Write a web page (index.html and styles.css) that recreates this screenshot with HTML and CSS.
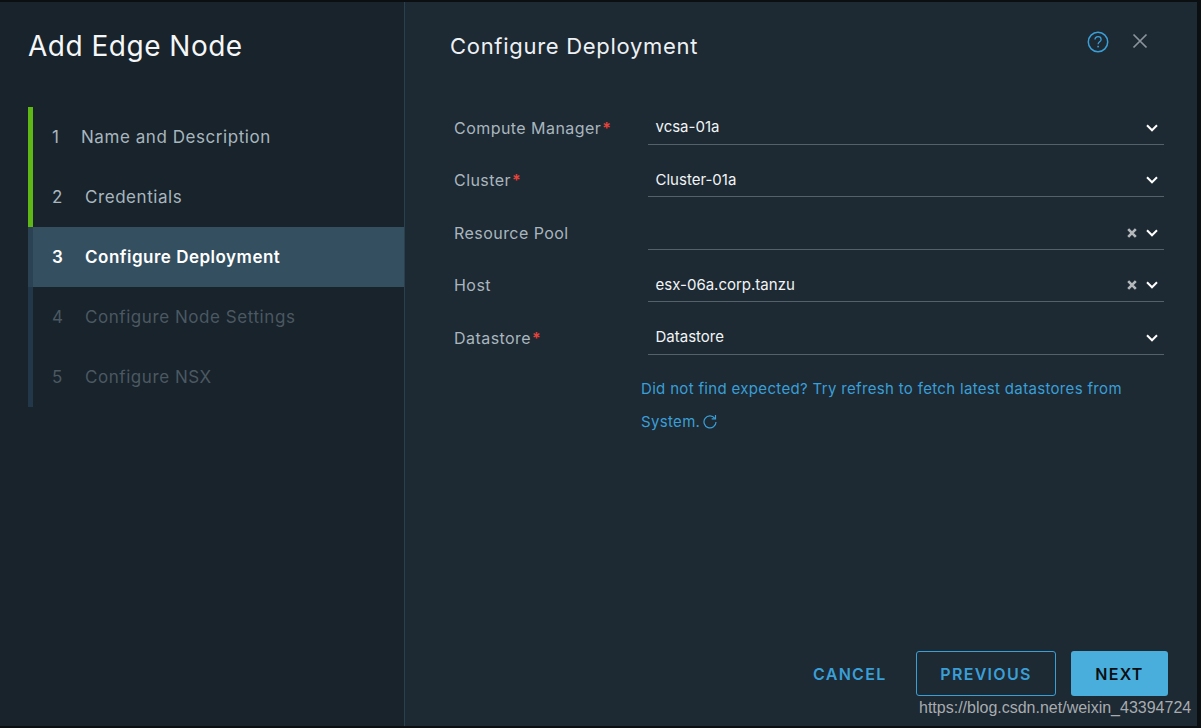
FILE: index.html
```html
<!DOCTYPE html>
<html lang="en">
<head>
<meta charset="utf-8">
<title>Add Edge Node</title>
<link rel="stylesheet" href="styles.css">
</head>
<body>
<div class="modal">
  <aside class="side">
    <h1 class="side-title">Add Edge Node</h1>
    <ol class="steps">
      <li class="step done"><span class="num num-first">1</span><span>Name and Description</span></li>
      <li class="step done"><span class="num">2</span><span>Credentials</span></li>
      <li class="step active"><span class="num">3</span><span>Configure Deployment</span></li>
      <li class="step todo"><span class="num">4</span><span>Configure Node Settings</span></li>
      <li class="step todo"><span class="num">5</span><span>Configure NSX</span></li>
    </ol>
  </aside>
  <main class="main">
    <header class="head">
      <h2 class="main-title">Configure Deployment</h2>
      <div class="head-icons">
        <svg class="help" width="22" height="22" viewBox="0 0 22 22" fill="none"><circle cx="11" cy="11" r="9.7" stroke="#3a9fd6" stroke-width="1.5"/><path d="M8 8.6c0-1.8 1.4-3 3.1-3s3 1.1 3 2.8c0 2.4-3 2.4-3 4.9" stroke="#3a9fd6" stroke-width="1.3"/><rect x="10.3" y="14.8" width="1.6" height="1.6" fill="#3a9fd6"/></svg>
        <svg class="close" width="16" height="16" viewBox="0 0 16 16" fill="none"><path d="M1.5 1.5l13 13M14.5 1.5l-13 13" stroke="#8a949c" stroke-width="1.7"/></svg>
      </div>
    </header>
    <form class="form">
      <div class="row"><label class="label">Compute Manager<span class="req">*</span></label>
        <div class="select"><span class="val">vcsa-01a</span><svg class="chev" width="12" height="8" viewBox="0 0 12 8" fill="none"><path d="M1 1.3l5 5 5-5" stroke="#fff" stroke-width="2"/></svg></div></div>
      <div class="row"><label class="label">Cluster<span class="req">*</span></label>
        <div class="select"><span class="val">Cluster-01a</span><svg class="chev" width="12" height="8" viewBox="0 0 12 8" fill="none"><path d="M1 1.3l5 5 5-5" stroke="#fff" stroke-width="2"/></svg></div></div>
      <div class="row"><label class="label">Resource Pool</label>
        <div class="select"><span class="val"></span><svg class="clear" width="10" height="10" viewBox="0 0 10 10" fill="none"><path d="M1.2 1.2l7.6 7.6M8.8 1.2L1.2 8.800" stroke="#b4b8bb" stroke-width="2.600"/></svg><svg class="chev" width="12" height="8" viewBox="0 0 12 8" fill="none"><path d="M1 1.3l5 5 5-5" stroke="#fff" stroke-width="2"/></svg></div></div>
      <div class="row"><label class="label">Host</label>
        <div class="select"><span class="val">esx-06a.corp.tanzu</span><svg class="clear" width="10" height="10" viewBox="0 0 10 10" fill="none"><path d="M1.2 1.2l7.6 7.6M8.8 1.2L1.2 8.800" stroke="#b4b8bb" stroke-width="2.600"/></svg><svg class="chev" width="12" height="8" viewBox="0 0 12 8" fill="none"><path d="M1 1.3l5 5 5-5" stroke="#fff" stroke-width="2"/></svg></div></div>
      <div class="row"><label class="label">Datastore<span class="req">*</span></label>
        <div class="select"><span class="val">Datastore</span><svg class="chev" width="12" height="8" viewBox="0 0 12 8" fill="none"><path d="M1 1.3l5 5 5-5" stroke="#fff" stroke-width="2"/></svg></div></div>
      <p class="hint">Did not find expected? Try refresh to fetch latest datastores from System.<svg class="refresh" width="14" height="15" viewBox="0 0 14 15" fill="none"><path d="M11.800 4.300A6 6 0 1 0 13 8" stroke="#3a9fd6" stroke-width="1.200"/><path d="M12.500 1v3.800H8.700" stroke="#3a9fd6" stroke-width="1.200"/></svg></p>
    </form>
    <footer class="foot">
      <button class="btn link" type="button">CANCEL</button>
      <button class="btn outline" type="button">PREVIOUS</button>
      <button class="btn primary" type="button">NEXT</button>
    </footer>
  </main>
</div>
<div class="watermark">https://blog.csdn.net/weixin_43394724</div>
</body>
</html>
```
FILE: styles.css
```css
* { box-sizing: border-box; }
html, body { margin: 0; height: 100%; }
body {
  background: #0c0f12;
  font-family: Inter, "Noto Sans", sans-serif;
  overflow: hidden;
  position: relative;
  padding: 2px 4px 2px 0;
}
.modal { display: flex; height: 724px; background: #1d2933; }
.side {
  width: 405px;
  flex: none;
  background: #18232c;
  border-right: 1px solid #29404f;
  padding-left: 28px;
}
.side-title {
  margin: 0;
  padding: 26px 0 0 0;
  height: 105px;
  font-size: 28px;
  line-height: 36px;
  font-weight: 400;
  letter-spacing: 0.5px;
  color: #f4f6f7;
}
.steps { list-style: none; margin: 0; padding: 0; }
.step {
  display: flex;
  align-items: center;
  height: 60px;
  border-left: 5px solid #22384a;
  padding: 0 0 1px 19px;
  font-size: 17px;
  letter-spacing: 0.56px;
  color: #a9b6be;
}
.step.done { border-left-color: #5eb715; }
.step.active { background: #344f60; color: #fff; font-weight: 600; letter-spacing: 0.5px; border-left-color: #2b4254; }
.step.todo { color: #4b5861; }
.num { width: 33px; flex: none; }
.num-first { width: 29px; }
.main { flex: 1; min-width: 0; display: flex; flex-direction: column; padding: 0 32px 0 46px; }
.head { display: flex; justify-content: space-between; height: 90px; padding-top: 26px; }
.main-title {
  margin: 0 0 0 -1px;
  font-size: 22px;
  line-height: 36px;
  font-weight: 400;
  letter-spacing: 0.7px;
  color: #eef1f3;
}
.head-icons { display: flex; align-items: flex-start; gap: 23px; padding-right: 17px; }
.help { margin-top: 3px; }
.close { margin-top: 5px; }
.form { display: flex; flex-direction: column; margin: 0; }
.row { display: grid; grid-template-columns: 194px 516px; height: 52.5px; padding-left: 3px; }
.label {
  font-size: 16px;
  letter-spacing: 0.45px;
  color: #a9b6be;
  padding-top: 23.500px;
  line-height: 24px;
}
.req { color: #e8433a; margin-left: 1px; font-size: 16px; font-weight: 600; }
.select {
  display: flex;
  align-items: center;
  height: 52.5px;
  padding: 20px 6px 0 7.500px;
  border-bottom: 1.500px solid #55616a;
}
.val { flex: 1; font-size: 15px; color: #f1f4f5; margin-bottom: 2px; }
.clear { margin-right: 9px; }
.chev { flex: none; }
.hint {
  margin: 17px 0 0 0;
  padding-left: 190px;
  width: 703px;
  font-size: 15px;
  line-height: 33px;
  letter-spacing: 0.33px;
  color: #3a9fd6;
}
.refresh { margin-left: 3px; vertical-align: -2px; }
.foot { margin-top: auto; display: flex; align-items: center; gap: 15px; padding-bottom: 30px; justify-content: flex-end; margin-right: -3px; }
.btn {
  font-family: inherit;
  font-size: 16px;
  font-weight: 600;
  letter-spacing: 1.300px;
  height: 45px;
  border-radius: 3px;
  border: 1px solid transparent;
  background: none;
  padding: 0;
}
.link { color: #3a9fd6; width: 73px; margin-right: 16px; }
.outline { width: 140px; color: #3a9fd6; border-color: #3a9fd6; }
.primary { width: 97px; color: #0b0f12; background: #49aedc; }
.watermark {
  position: absolute;
  left: 919px;
  top: 699px;
  font-family: "Liberation Sans", sans-serif;
  font-size: 16px;
  line-height: 18px;
  color: #a8acaf;
  white-space: nowrap;
}
```
